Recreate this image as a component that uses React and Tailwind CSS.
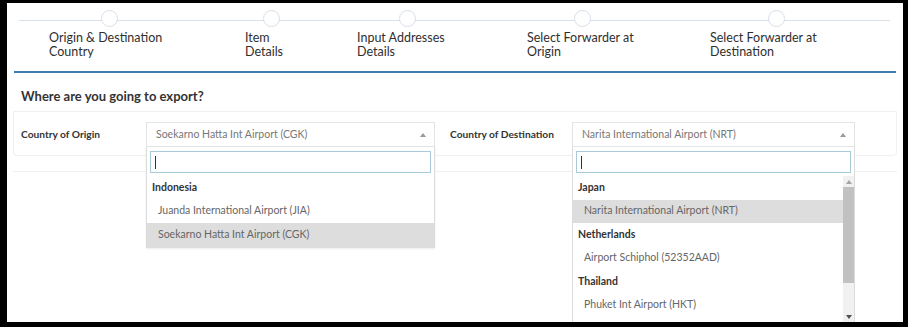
import React from "react";

const steps = [
  { w: "w-[196px]", ml: "ml-[52px]", a: "Origin & Destination", b: "Country" },
  { w: "w-[112px]", ml: "ml-[18px]", a: "Item", b: "Details" },
  { w: "w-[170px]", ml: "ml-[42px]", a: "Input Addresses", b: "Details" },
  { w: "w-[183px]", ml: "ml-[47px]", a: "Select Forwarder at", b: "Origin" },
  { w: "w-[160px]", ml: "ml-[58px]", a: "Select Forwarder at", b: "Destination" },
];

function Arrow({ color = "border-b-[#999]" }) {
  return (
    <span
      className={`inline-block w-0 h-0 border-l-[3px] border-r-[3px] border-b-[4px] border-l-transparent border-r-transparent ${color}`}
    />
  );
}

function Group({ children }) {
  return (
    <div className="h-[23.5px] flex items-center pl-[5px] text-[10.5px] font-bold text-[#333]">
      {children}
    </div>
  );
}

function Item({ children, active }) {
  return (
    <div
      className={`h-[23.5px] flex items-center pl-[11px] text-[10.5px] text-[#666] ${
        active ? "bg-[#dddddd]" : ""
      }`}
    >
      {children}
    </div>
  );
}

function Select({ value, width, children }) {
  return (
    <div className={`relative ${width}`}>
      <div className="h-[25px] border border-[#e4e4e4] flex items-center justify-between pl-[9px] pr-[8px] text-[10.5px] text-[#777] bg-white">
        <span>{value}</span>
        <Arrow />
      </div>
      {children}
    </div>
  );
}

function Search() {
  return (
    <div className="pt-[4px] px-[3px] pb-[3px]">
      <div className="h-[22px] border border-[#a9cbd9] flex items-center pl-[4px]">
        <div className="w-[1px] h-[13px] bg-[#333]" />
      </div>
    </div>
  );
}

export default function App() {
  return (
    <div className="w-[908px] h-[327px] bg-black pl-[7px] pt-[3px] pr-[5px] pb-[5px] font-['Lato','Noto_Sans',sans-serif]">
      <div className="relative h-full bg-white overflow-hidden">
        {/* stepper */}
        <div className="relative pt-[7px] pl-[42px]">
          <div className="absolute left-[12px] top-[17px] w-[871px] h-[1px] bg-[#d8e0e8]" />
          <div className="relative flex">
            {steps.map((s, i) => (
              <div key={i} className={`${s.w} shrink-0 flex flex-col`}>
                <div
                  className={`${s.ml} w-[17px] h-[17px] rounded-full bg-white border border-[#d8e0e8]`}
                />
                <div className="mt-[4px] text-[12.5px] leading-[14px] text-[#2f2f2f]">
                  <div>{s.a}</div>
                  <div>{s.b}</div>
                </div>
              </div>
            ))}
          </div>
        </div>

        <div className="mt-[12px] mx-[7px] h-[2px] bg-[#3f7cae]" />

        <div className="pl-[14px] pt-[13px] h-[38px] text-[13px] leading-[20px] font-bold text-[#333]">
          Where are you going to export?
        </div>

        <div className="mx-[6px] h-[45px] border border-[#f0f0f0] rounded-b-[4px] flex items-start pt-[10px] pl-[7px]">
          <div className="w-[125px] h-[25px] flex items-center text-[10.2px] font-bold text-[#333]">
            Country of Origin
          </div>
          <Select value="Soekarno Hatta Int Airport (CGK)" width="w-[289px]">
            <div className="absolute left-0 top-full w-full h-[101px] bg-white border border-t-0 border-[#dcdcdc] shadow-[0_1px_2px_rgba(0,0,0,0.08)] z-10">
              <Search />
              <Group>Indonesia</Group>
              <Item>Juanda International Airport (JIA)</Item>
              <Item active>Soekarno Hatta Int Airport (CGK)</Item>
            </div>
          </Select>
          <div className="ml-[15px] w-[122px] h-[25px] flex items-center text-[10.2px] font-bold text-[#333]">
            Country of Destination
          </div>
          <Select value="Narita International Airport (NRT)" width="w-[283px]">
            <div className="absolute left-0 top-full w-full h-[200px] bg-white border border-t-0 border-[#dcdcdc] z-10">
              <Search />
              <div className="flex">
                <div className="flex-1">
                  <Group>Japan</Group>
                  <Item active>Narita International Airport (NRT)</Item>
                  <Group>Netherlands</Group>
                  <Item>Airport Schiphol (52352AAD)</Item>
                  <Group>Thailand</Group>
                  <Item>Phuket Int Airport (HKT)</Item>
                </div>
                <div className="w-[11px] h-[146px] bg-[#f1f1f1] flex flex-col items-center">
                  <div className="h-[11px] flex items-center justify-center">
                    <Arrow color="border-b-[#a3a3a3]" />
                  </div>
                  <div className="w-[11px] h-[96px] bg-[#c1c1c1]" />
                  <div className="flex-1" />
                  <div className="h-[11px] flex items-center justify-center">
                    <span className="inline-block w-0 h-0 border-l-[3px] border-r-[3px] border-t-[4px] border-l-transparent border-r-transparent border-t-[#505050]" />
                  </div>
                </div>
              </div>
            </div>
          </Select>
        </div>

        <div className="mt-[15px] mx-[6px] h-[1px] bg-[#f0f0f0]" />
      </div>
    </div>
  );
}
